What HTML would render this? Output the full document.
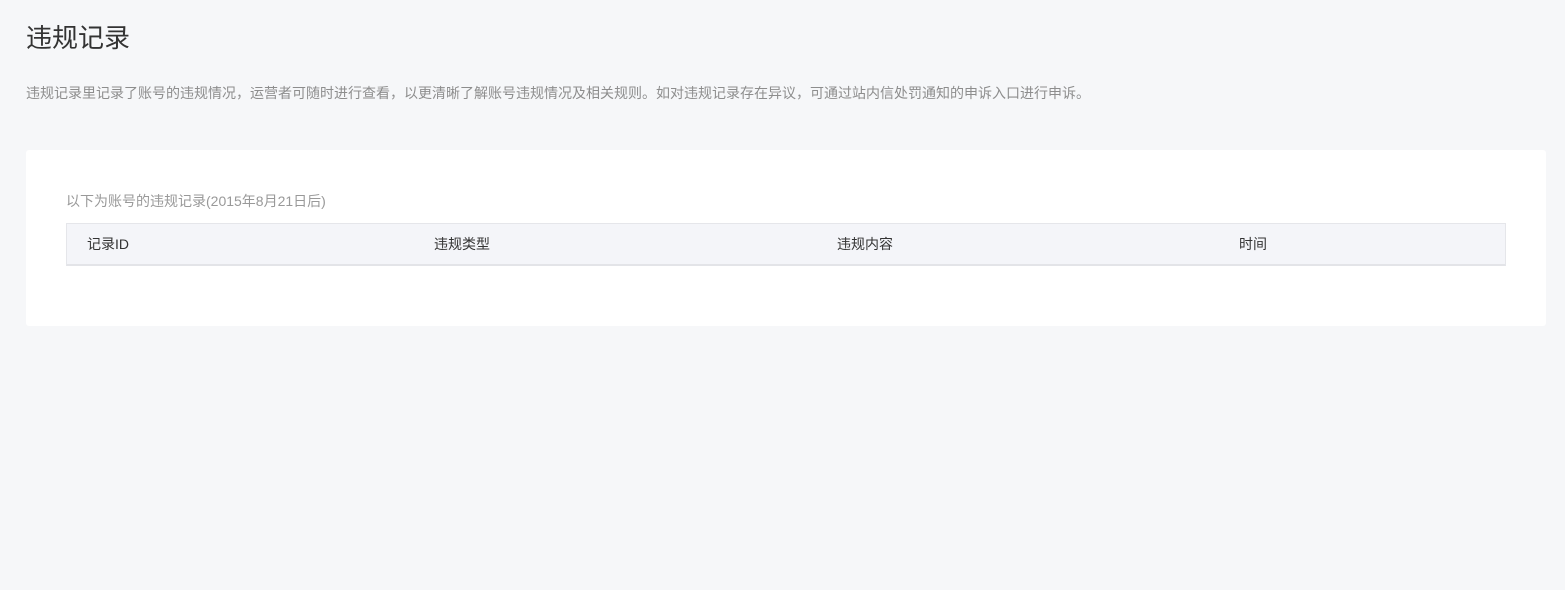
<!DOCTYPE html>
<html><head><meta charset="utf-8"><style>
body{margin:0;background:#f6f7f9;width:1565px;height:590px;font-family:"Liberation Sans","Noto Sans CJK SC",sans-serif;position:relative;overflow:hidden}
.t{position:absolute;left:26px;top:21px;font-size:26px;color:#333;line-height:34px}
.d{position:absolute;left:26px;top:84px;font-size:14px;color:#8d8d8d;line-height:18px;white-space:nowrap}
.card{position:absolute;left:26px;top:150px;width:1520px;height:176px;background:#fff;border-radius:3px}
.s{position:absolute;left:40px;top:41px;font-size:14px;color:#999;line-height:20px;white-space:nowrap}
.th{position:absolute;left:40px;top:73px;width:1438px;height:40px;background:#f4f5f9;border:1px solid #e5e6ea;border-bottom:2px solid #e3e4e8}
.th span{position:absolute;top:11px;font-size:14px;color:#333;line-height:18px}
</style></head><body>
<div class="t">违规记录</div>
<div class="d">违规记录里记录了账号的违规情况，运营者可随时进行查看，以更清晰了解账号违规情况及相关规则。如对违规记录存在异议，可通过站内信处罚通知的申诉入口进行申诉。</div>
<div class="card">
<div class="s">以下为账号的违规记录(2015年8月21日后)</div>
<div class="th"><span style="left:20px">记录ID</span><span style="left:367px">违规类型</span><span style="left:770px">违规内容</span><span style="left:1172px">时间</span></div>
</div>
</body></html>
